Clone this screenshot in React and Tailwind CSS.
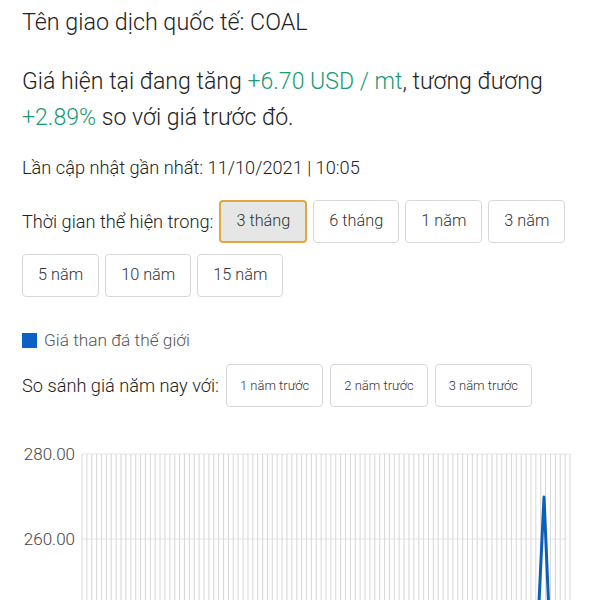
import React from "react";

const timeOpts = ["3 tháng", "6 tháng", "1 năm", "3 năm", "5 năm", "10 năm", "15 năm"];
const cmpOpts = ["1 năm trước", "2 năm trước", "3 năm trước"];

function Chart() {
  const x0 = 82;
  const x1 = 570;
  const n = 101;
  const lines = [];
  for (let i = 0; i < n; i++) {
    const x = x0 + ((x1 - x0) * i) / (n - 1);
    lines.push(<line key={i} x1={x} x2={x} y1={14} y2={160} stroke="#dadada" strokeWidth="1.1" />);
  }
  return (
    <svg width="600" height="160" className="block">
      <line x1={x0} x2={x1} y1={14} y2={14} stroke="#e4e4e4" strokeWidth="1" />
      <line x1={x0} x2={567} y1={99} y2={99} stroke="#e4e4e4" strokeWidth="1" />
      {lines}
      <text x="75" y="20" textAnchor="end" fontFamily="Roboto, sans-serif" fontSize="17" fill="#444">280.00</text>
      <text x="75" y="105" textAnchor="end" fontFamily="Roboto, sans-serif" fontSize="17" fill="#444">260.00</text>
      <polyline points="539,162 544,57 548.5,162" fill="none" stroke="#0d5fb5" strokeWidth="3" strokeLinejoin="round" />
    </svg>
  );
}

export default function App() {
  return (
    <div className="w-[600px] h-[600px] overflow-hidden bg-white text-[#222] font-light font-['Roboto',sans-serif]">
      <div className="pl-[22px] pr-[10px]">
        <div className="pt-[8px] text-[23.3px] leading-[28px]">Tên giao dịch quốc tế: COAL</div>
        <div className="mt-[28px] text-[23.1px] leading-[36px]">
          Giá hiện tại đang tăng <span className="text-[#1a9a70]">+6.70 USD / mt</span>, tương đương{" "}
          <span className="text-[#1a9a70]">+2.89%</span> so với giá trước đó.
        </div>
        <div className="mt-[18px] text-[18.2px] leading-[28px]">Lần cập nhật gần nhất: 11/10/2021 | 10:05</div>
        <div className="mt-[18px] flex flex-wrap items-center gap-x-[6px] gap-y-[11px]">
          <span className="text-[18.2px] leading-[28px]">Thời gian thể hiện trong:</span>
          {timeOpts.map((t, i) => (
            <button
              key={t}
              className={
                i === 0
                  ? "h-[43px] px-[15px] rounded-[4px] border-2 border-[#e2a73f] bg-[#e6e6e6] text-[16.3px] text-[#333]"
                  : "h-[43px] px-[15px] rounded-[4px] border border-[#d8d8d8] bg-white text-[16.3px] text-[#333]"
              }
            >
              {t}
            </button>
          ))}
        </div>
        <div className="mt-[31px] flex items-center gap-[7px]">
          <span className="w-[15px] h-[15px] bg-[#0b62c4]"></span>
          <span className="text-[17.3px] leading-[24px] text-[#555]">Giá than đá thế giới</span>
        </div>
        <div className="mt-[12px] flex items-center gap-[7px]">
          <span className="text-[18.2px] leading-[28px]">So sánh giá năm nay với:</span>
          {cmpOpts.map((t) => (
            <button key={t} className="h-[43px] px-[13px] rounded-[4px] border border-[#d8d8d8] bg-white text-[13px] text-[#333]">
              {t}
            </button>
          ))}
        </div>
      </div>
      <div className="mt-[33px]">
        <Chart />
      </div>
    </div>
  );
}
